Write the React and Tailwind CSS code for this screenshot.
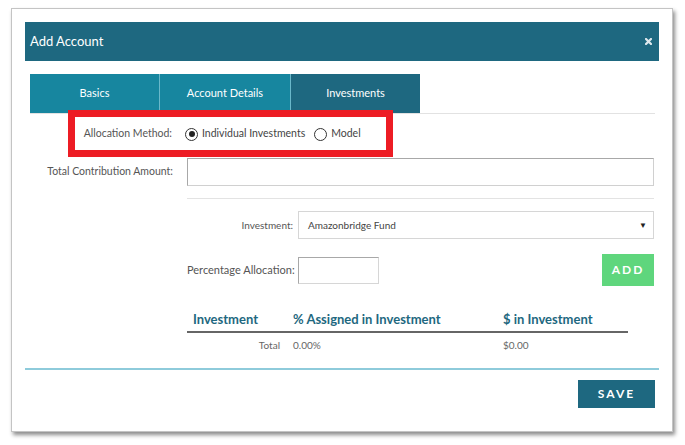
const font = { fontFamily: "Lato, 'Open Sans', sans-serif" };

const Radio = ({ checked, label }) => (
  <label className="flex items-center gap-[4px]">
    <span className="flex items-center justify-center w-[13px] h-[13px] rounded-full border-[1.5px] border-[#333] bg-white">
      {checked && <span className="w-[6px] h-[6px] rounded-full bg-[#222]"></span>}
    </span>
    <span>{label}</span>
  </label>
);

const App = () => {
  return (
    <div className="relative w-[685px] h-[445px] bg-white pt-[8px] pl-[11px]" style={font}>
      <div className="w-[662px] h-[424px] bg-white border border-[#c4c4c4] shadow-[2px_3px_4px_rgba(0,0,0,0.45)] pt-[13px] px-[13px]">
        {/* header */}
        <div className="flex items-center justify-between h-[39px] bg-[#1e6880] pl-[5px] pr-[7px]">
          <span className="text-white text-[13px]">Add Account</span>
          <svg width="7" height="7" viewBox="0 0 7 7">
            <path d="M1 1L6 6M6 1L1 6" stroke="#dfe9ee" strokeWidth="2.2" strokeLinecap="square" />
          </svg>
        </div>

        {/* tabs */}
        <div className="mt-[13px] ml-[5px] mr-[4px] flex border-b border-[#e2e2e2]">
          <div className="w-[130px] h-[39px] flex items-center justify-center bg-[#17869f] text-white text-[11px] border-r border-[#6ab8ca]">
            Basics
          </div>
          <div className="w-[131px] h-[39px] flex items-center justify-center bg-[#17869f] text-white text-[11px] border-r border-[#6ab8ca]">
            Account Details
          </div>
          <div className="w-[129px] h-[39px] flex items-center justify-center bg-[#1e6880] text-white text-[11px]">
            Investments
          </div>
        </div>

        {/* form */}
        <div className="ml-[5px] mr-[5px] text-[10.5px] text-[#555]">
          <div className="mt-[7px] h-[26px] flex items-center">
            <div className="w-[143px] text-right pr-[1px]">Allocation Method:</div>
            <div className="ml-[12px] flex items-center gap-[9px] text-[#444]">
              <Radio checked label="Individual Investments" />
              <Radio label="Model" />
            </div>
          </div>

          <div className="mt-[11px] h-[28px] flex items-center">
            <div className="w-[143px] text-right text-[10.5px] whitespace-nowrap">Total Contribution Amount:</div>
            <div className="ml-[14px] flex-1 h-[28px] border border-[#d0d0d0] border-t-[#a8a8a8] border-l-[#a8a8a8]"></div>
          </div>

          <div className="ml-[157px]">
            <div className="mt-[12px] border-t border-[#e3e3e3]"></div>

            <div className="mt-[12px] h-[28px] flex items-center">
              <div className="w-[106px] text-right text-[10px]">Investment:</div>
              <div className="ml-[5px] flex-1 h-[28px] border border-[#d6d6d6] flex items-center justify-between pl-[9px] pr-[6px] text-[10px] text-[#444]">
                <span>Amazonbridge Fund</span>
                <span className="text-[8px] text-[#222]">▼</span>
              </div>
            </div>

            <div className="mt-[15px] h-[32px] flex items-center">
              <div className="w-[106px] text-right text-[11px] whitespace-nowrap">Percentage Allocation:</div>
              <div className="ml-[5px] w-[81px] h-[27px] border border-[#d6d6d6] border-t-[#a8a8a8] border-l-[#a8a8a8]"></div>
              <div className="ml-auto w-[52px] h-[32px] bg-[#5fd67d] flex items-center justify-center text-white font-bold text-[12px] tracking-[2px]">
                ADD
              </div>
            </div>

            <div className="mt-[23px] w-[441px]">
              <div className="grid grid-cols-[100px_210px_1fr] h-[24px] items-center border-b-2 border-[#666] text-[13px] font-bold text-[#1e6880]">
                <div className="pl-[6px]">Investment</div>
                <div className="pl-[6px]">% Assigned in Investment</div>
                <div className="pl-[6px]">$ in Investment</div>
              </div>
              <div className="grid grid-cols-[100px_210px_1fr] h-[24px] items-center text-[10px] text-[#666]">
                <div className="text-right pr-[7px]">Total</div>
                <div className="pl-[6px]">0.00%</div>
                <div className="pl-[6px]">$0.00</div>
              </div>
            </div>
          </div>
        </div>

        {/* footer */}
        <div className="mt-[11px] border-t-2 border-[#8ecbdb]"></div>
        <div className="flex justify-end pr-[4px]">
          <div className="mt-[10px] w-[77px] h-[28px] bg-[#1e6880] flex items-center justify-center text-white font-bold text-[12px] tracking-[2px]">
            SAVE
          </div>
        </div>
      </div>

      {/* annotation */}
      <div className="absolute left-[68px] top-[110px] w-[325px] h-[47px] border-[7px] border-[#ed1c24]"></div>
    </div>
  );
};

export default App;
